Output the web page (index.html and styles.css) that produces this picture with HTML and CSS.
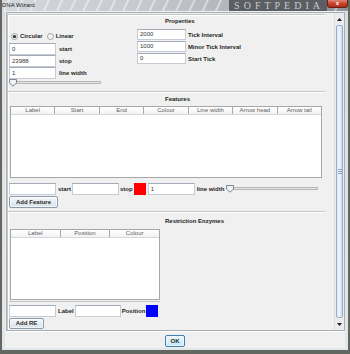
FILE: index.html
```html
<!DOCTYPE html>
<html lang="en">
<head>
  <meta charset="UTF-8" />
  <title>DNA Wizard</title>
  <link rel="stylesheet" href="styles.css">
</head>
<body>
  <div class="window">
    <div class="titlebar">
      <span class="title">DNA Wizard</span>
      <span class="watermark">SOFTPEDIA</span>
      <span class="close">x</span>
    </div>

    <div class="client">
      <div class="scrollpane">
        <div class="content">

          <!-- Properties -->
          <section class="panel props">
            <h2 class="panel-title">Properties</h2>
            <div class="props-body">
              <div class="col-left">
                <div class="radios">
                  <svg class="radio" width="7" height="7" viewBox="0 0 7 7">
                    <circle cx="3.5" cy="3.5" r="3" fill="#f4f4f4" stroke="#8e8f8f" stroke-width="0.8"/>
                    <circle cx="3.5" cy="3.5" r="1.6" fill="#2a2a2a"/>
                  </svg>
                  <span class="lbl">Circular</span>
                  <svg class="radio second" width="7" height="7" viewBox="0 0 7 7">
                    <circle cx="3.5" cy="3.5" r="3" fill="#f4f4f4" stroke="#8e8f8f" stroke-width="0.8"/>
                  </svg>
                  <span class="lbl">Linear</span>
                </div>
                <div class="row"><span class="field">0</span><span class="lbl gap3">start</span></div>
                <div class="row"><span class="field">23988</span><span class="lbl gap3">stop</span></div>
                <div class="row"><span class="field">1</span><span class="lbl gap3">line width</span></div>
                <svg class="slider" width="92" height="8" viewBox="0 0 92 8">
                  <rect x="2.5" y="2.5" width="89" height="2" fill="#e6e6e6" stroke="#a8a8a8" stroke-width="0.8"/>
                  <path d="M0.5 0.5 H7.5 V4 L4 7.2 L0.5 4 Z" fill="#f3f3f3" stroke="#6f7c8c" stroke-width="0.9"/>
                </svg>
              </div>
              <div class="col-right">
                <div class="row small"><span class="field wide">2000</span><span class="lbl gap2">Tick Interval</span></div>
                <div class="row small"><span class="field wide">1000</span><span class="lbl gap2">Minor Tick Interval</span></div>
                <div class="row small lower"><span class="field wide">0</span><span class="lbl gap2">Start Tick</span></div>
              </div>
            </div>
          </section>

          <!-- Features -->
          <section class="panel features">
            <h2 class="panel-title">Features</h2>
            <div class="table feat-table">
              <div class="thead">
                <span>Label</span><span>Start</span><span>End</span><span>Colour</span><span>Line width</span><span>Arrow head</span><span>Arrow tail</span>
              </div>
            </div>
            <div class="row entry">
              <span class="field"></span>
              <span class="lbl gap2">start</span>
              <span class="field gap1"></span>
              <span class="lbl gap1">stop</span>
              <span class="swatch red"></span>
              <span class="field gap2">1</span>
              <span class="lbl gap2">line width</span>
              <svg class="slider gap2" width="92" height="8" viewBox="0 0 92 8">
                <rect x="2.5" y="2.5" width="89" height="2" fill="#e6e6e6" stroke="#a8a8a8" stroke-width="0.8"/>
                <path d="M0.5 0.5 H7.5 V4 L4 7.2 L0.5 4 Z" fill="#f3f3f3" stroke="#6f7c8c" stroke-width="0.9"/>
              </svg>
            </div>
            <button class="btn add-feature">Add Feature</button>
          </section>

          <!-- Restriction Enzymes -->
          <section class="panel enzymes">
            <h2 class="panel-title">Restriction Enzymes</h2>
            <div class="table re-table">
              <div class="thead">
                <span>Label</span><span>Position</span><span>Colour</span>
              </div>
            </div>
            <div class="table-rule"></div>
            <div class="row entry re-entry">
              <span class="field"></span>
              <span class="lbl gap2">Label</span>
              <span class="field narrow gap1"></span>
              <span class="lbl gap1">Position</span>
              <span class="swatch blue"></span>
            </div>
            <button class="btn add-re">Add RE</button>
          </section>

        </div>

        <div class="scrollbar">
          <div class="sb-btn">
            <svg width="5" height="3" viewBox="0 0 5 3"><path d="M0 3 L2.5 0 L5 3 Z" fill="#222"/></svg>
          </div>
          <div class="sb-thumb"><span class="grip"></span></div>
          <div class="sb-btn">
            <svg width="5" height="3" viewBox="0 0 5 3"><path d="M0 0 L2.5 3 L5 0 Z" fill="#222"/></svg>
          </div>
        </div>
      </div>

      <div class="buttons">
        <button class="btn ok">OK</button>
      </div>
    </div>
  </div>
</body>
</html>
```

FILE: styles.css
```css
* {
  margin: 0;
  padding: 0;
  box-sizing: border-box;
}
body {
  width: 350px;
  height: 354px;
  overflow: hidden;
  background: #62675f;
  font-family: 'Liberation Sans', Arial, sans-serif;
  font-size: 6px;
  line-height: 1;
  color: #222;
}
.window {
  margin-left: 2px;
  width: 346px;
  height: 350px;
  background: linear-gradient(180deg, #d9dde2 0%, #e3e6ea 100%);
  padding: 0 3px 0 3px;
  display: flex;
  flex-direction: column;
}

/* title bar */
.titlebar {
  height: 11px;
  display: flex;
  align-items: flex-start;
  margin: 0 -3px;
  background:
    repeating-linear-gradient(115deg, rgba(255,255,255,0) 0 5px, rgba(255,255,255,0.45) 6px 7px, rgba(255,255,255,0) 8px 12px),
    linear-gradient(90deg, #d4d8dc 0%, #c6cacf 40%, #b7bbc0 60%, #8f9398 100%);
}
.title {
  margin-top: 2px;
  color: #1a1a1a;
  font-size: 6px;
}
.watermark {
  margin-left: auto;
  height: 11px;
  padding: 0 3px 0 5px;
  background: #5b5f63;
  color: #c9cbcd;
  font-family: 'Liberation Serif', serif;
  font-size: 10px;
  line-height: 11px;
  letter-spacing: 4px;
}
.close {
  width: 21px;
  height: 8px;
  background: linear-gradient(180deg, #e08a78 0%, #c8432b 50%, #b0301c 100%);
  border: 1px solid #6b1f14;
  border-top: none;
  border-radius: 0 0 3px 3px;
  color: #fff;
  font-weight: bold;
  font-size: 6px;
  line-height: 7px;
  text-align: center;
}

/* client */
.client {
  flex: 1;
  background: #f0f0f0;
  padding: 1px 0 0 1px;
  display: flex;
  flex-direction: column;
  margin-bottom: 2px;
}
.scrollpane {
  width: 339px;
  height: 319px;
  border: 1px solid #a9adb3;
  display: flex;
  background: #f0f0f0;
}
.content {
  flex: 1;
  overflow: hidden;
  padding-top: 1px;
}
.panel {
  width: 318px;
  border-top: 1px solid #c6c6c6;
  border-left: 1px solid #c6c6c6;
  box-shadow: inset 1px 1px 0 #ffffff;
}
.panel-title {
  font-size: 6px;
  font-weight: bold;
  height: 9px;
  line-height: 9px;
  padding-left: 157px;
  color: #1c1c1c;
}
.lbl {
  font-weight: bold;
  white-space: nowrap;
  color: #1f1f1f;
}
.gap1 { margin-left: 1px; }
.gap2 { margin-left: 2px; }
.gap3 { margin-left: 3px; }

.field {
  display: inline-block;
  width: 47px;
  height: 12px;
  background: #fff;
  border: 1px solid #c5ccd6;
  border-top-color: #a4acb8;
  padding-left: 2px;
  line-height: 10px;
  color: #333;
  flex: none;
}
.field.wide { width: 49px; height: 11px; line-height: 9px; }
.field.narrow { width: 46px; }

.row {
  display: flex;
  align-items: center;
  height: 12px;
}

/* properties */
.props {
  height: 77px;
}
.props .panel-title {
  margin-top: 2px;
}
.props-body {
  display: flex;
  margin-top: 3px;
}
.col-left {
  width: 128px;
  margin-left: 1px;
}
.radios {
  display: flex;
  align-items: center;
  height: 14px;
  padding-left: 2px;
}
.radio + .lbl { margin-left: 2px; }
.radio.second { margin-left: 4px; }
.slider {
  display: block;
  flex: none;
}
.row.small { height: 11px; }
.row.small + .row.small { margin-top: 1px; }
.row.small.lower { margin-top: 2px; }

/* features */
.features {
  height: 120px;
}
.features .panel-title {
  margin-top: 3px;
}
.table {
  margin-left: 2px;
  background: #fff;
  border: 1px solid #a7a7a7;
}
.thead {
  display: flex;
  height: 8px;
  background: linear-gradient(180deg, #ffffff 0%, #f1f2f4 100%);
  border-bottom: 1px solid #d7d7d7;
}
.thead span {
  flex: 1;
  text-align: center;
  color: #5d5d5d;
  line-height: 7px;
  border-left: 1px solid #a8a8a8;
}
.thead span:first-child {
  border-left: none;
}
.feat-table {
  width: 312px;
  height: 72px;
  margin-top: 2px;
}
.entry {
  margin-left: 1px;
  margin-top: 5px;
}
.swatch {
  width: 12px;
  height: 12px;
  flex: none;
  margin-left: 1px;
}
.swatch.red { background: #ff0000; }
.swatch.blue { background: #0000ff; }

.btn {
  display: block;
  font-family: 'Liberation Sans', Arial, sans-serif;
  font-size: 6px;
  font-weight: bold;
  color: #2b2b2b;
  height: 12px;
  line-height: 10px;
  border: 1px solid #8d9aab;
  border-radius: 2px;
  background: linear-gradient(180deg, #f4f7fa 0%, #e6ecf2 50%, #d6dfe9 100%);
  box-shadow: inset 0 0 0 1px rgba(255,255,255,0.7);
}
.add-feature {
  width: 49px;
  margin: 1px 0 0 1px;
}

/* restriction enzymes */
.enzymes {
  height: 130px;
}
.enzymes .panel-title {
  margin-top: 5px;
}
.re-table {
  width: 150px;
  height: 71px;
  margin-top: 3px;
}
.table-rule {
  width: 151px;
  height: 1px;
  margin: 1px 0 0 1px;
  background: #c4c4c4;
}
.re-entry {
  margin-top: 3px;
}
.add-re {
  width: 35px;
  height: 11px;
  line-height: 9px;
  margin: 1px 0 0 1px;
}

/* scrollbar */
.scrollbar {
  width: 10px;
  background: #ececee;
  border-left: 1px solid #e2e2e4;
  display: flex;
  flex-direction: column;
  padding: 1px 0;
}
.sb-btn {
  height: 10px;
  display: flex;
  align-items: center;
  justify-content: center;
}
.sb-thumb {
  flex: 1;
  margin: 1px 1px;
  border: 1px solid #97aecb;
  border-radius: 2px;
  background: linear-gradient(90deg, #dbe6f4 0%, #f3f7fc 45%, #c9d9ee 100%);
  display: flex;
  align-items: center;
  justify-content: center;
}
.grip {
  width: 4px;
  height: 5px;
  background: repeating-linear-gradient(180deg, #8aa1bf 0 1px, transparent 1px 2px);
}

/* bottom buttons */
.buttons {
  flex: 1;
  display: flex;
  justify-content: center;
  padding-top: 3px;
  border-top: 1px solid #ffffff;
}
.ok {
  width: 20px;
  height: 12px;
  border-color: #3c7fb1;
  background: linear-gradient(180deg, #eaf6fd 0%, #d9f0fc 50%, #bee6fd 100%);
  margin-left: -1px;
}
```
